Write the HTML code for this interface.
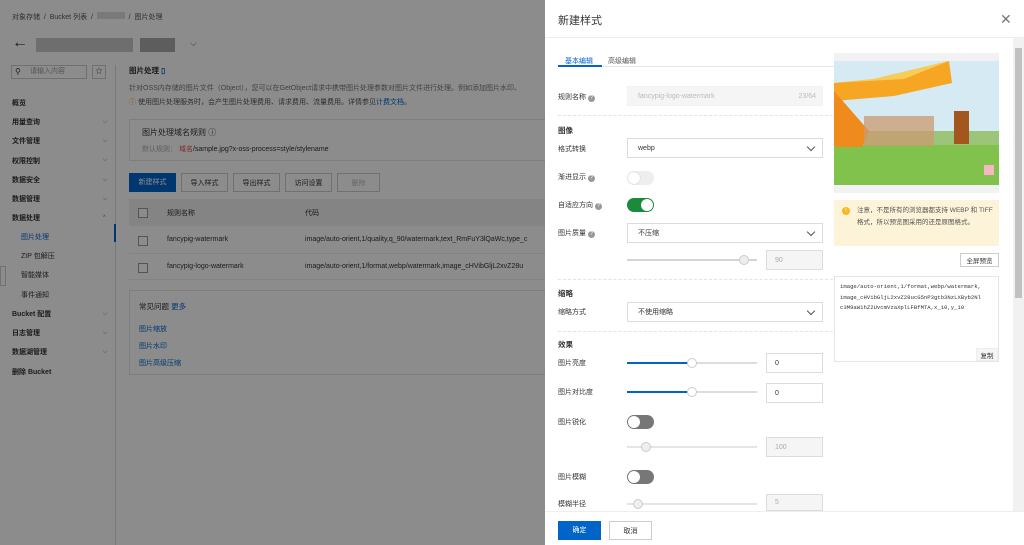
<!DOCTYPE html>
<html><head><meta charset="utf-8"><style>
*{box-sizing:border-box;margin:0;padding:0}
body{width:1024px;height:545px;overflow:hidden;position:relative;background:#fff;font-family:"Liberation Sans","Noto Sans CJK SC",sans-serif;font-size:7px;color:#333}
.a{position:absolute;white-space:nowrap}
.ov{position:absolute;left:0;top:0;width:1024px;height:545px;background:rgba(0,0,0,.45)}
.dr{position:absolute;left:545px;top:0;width:479px;height:545px;background:#fff}
.lb{position:absolute;left:13px;font-size:7px;color:#333}
.q{display:inline-block;width:7px;height:7px;border-radius:50%;background:#999;color:#fff;font-size:5px;text-align:center;line-height:7px;margin-left:2px;vertical-align:0}
.inp{position:absolute;left:82px;width:196px;height:20px;border:1px solid #dcdcdc;background:#fff;padding-left:10px;display:flex;align-items:center;font-size:7px;color:#333}
.sel:after{content:"";position:absolute;right:8px;top:5px;width:5px;height:5px;border-right:1px solid #555;border-bottom:1px solid #555;transform:rotate(45deg)}
.dash{position:absolute;left:13px;width:275px;border-top:1px dashed #e3e3e3}
.sec{position:absolute;left:13px;font-size:7.5px;font-weight:bold;color:#333}
.tg{position:absolute;left:82px;width:27px;height:14px;border-radius:7px}
.tg i{position:absolute;top:1px;width:12px;height:12px;border-radius:50%;background:#fff}
.trk{position:absolute;left:82px;width:130px;height:2px;background:#ddd}
.knob{position:absolute;width:10px;height:10px;border-radius:50%;background:#fff;border:1px solid #ccc;top:-4px}
.num{position:absolute;left:221px;width:57px;height:20px;border:1px solid #dcdcdc;padding-left:8px;display:flex;align-items:center;color:#333;font-size:7px}
.num.d{background:#f5f5f5;color:#aaa}
.btn{position:absolute;height:20px;border:1px solid #ccc;background:#fff;display:flex;align-items:center;justify-content:center;font-size:7px}
</style></head><body>
<div class="a" style="left:12px;top:12px;color:#555">对象存储 &nbsp;/&nbsp; Bucket 列表 &nbsp;/&nbsp; <span style="display:inline-block;width:28px;height:7px;background:#ddd"></span> &nbsp;/&nbsp; 图片处理</div>
<div class="a" style="left:12px;top:34px;font-size:16px;color:#333">←</div>
<div class="a" style="left:36px;top:38px;width:97px;height:14px;background:#c8c8c8"></div>
<div class="a" style="left:140px;top:38px;width:35px;height:14px;background:#aaa"></div>
<div class="a" style="left:190px;top:38px;font-size:9px;color:#666">⌵</div>
<div class="a" style="left:11px;top:65px;width:76px;height:14px;border:1px solid #ccc;padding-left:18px;line-height:12px;color:#999">请输入内容</div>
<div class="a" style="left:15px;top:67px;font-size:8px;color:#333">⚲</div>
<div class="a" style="left:92px;top:65px;width:14px;height:14px;border:1px solid #ccc;text-align:center;line-height:12px;font-size:7px">☆</div>
<div class="a" style="left:12px;top:94px;font-weight:bold;line-height:19.2px">概览<br>用量查询<br>文件管理<br>权限控制<br>数据安全<br>数据管理<br>数据处理</div>
<div class="a" style="left:21px;top:228px;line-height:19.2px;color:#333"><span style="color:#0064c8">图片处理</span><br>ZIP 包解压<br>智能媒体<br>事件通知</div>
<div class="a" style="left:12px;top:305px;font-weight:bold;line-height:19.2px">Bucket 配置<br>日志管理<br>数据湖管理<br>删除 Bucket</div>
<div class="a" style="left:103px;top:113px;line-height:19.2px;color:#777;font-size:6px">⌵<br>⌵<br>⌵<br>⌵<br>⌵<br>^<br></div>
<div class="a" style="left:103px;top:305px;line-height:19.2px;color:#777;font-size:6px">⌵<br>⌵<br>⌵</div>
<div class="a" style="left:115px;top:65px;width:1px;height:480px;background:#ddd"></div>
<div class="a" style="left:114px;top:224px;width:2px;height:18px;background:#0064c8"></div>
<div class="a" style="left:129px;top:65px;font-weight:bold;font-size:7.5px">图片处理 <span style="color:#0064c8">▯</span></div>
<div class="a" style="left:129px;top:83px;color:#777">针对OSS内存储的图片文件（Object），您可以在GetObject请求中携带图片处理参数对图片文件进行处理。例如添加图片水印、</div>
<div class="a" style="left:129px;top:97px;color:#555"><span style="color:#f90">ⓘ</span> 使用图片处理服务时，会产生图片处理费用、请求费用、流量费用。详情参见<span style="color:#0064c8">计费文档</span>。</div>
<div class="a" style="left:129px;top:119px;width:420px;height:42px;border:1px solid #e5e5e5"></div>
<div class="a" style="left:142px;top:127px;font-size:8px;color:#333">图片处理域名规则 ⓘ</div>
<div class="a" style="left:142px;top:144px;color:#aaa">默认规则： <span style="color:#e44">域名</span><span style="color:#333">/sample.jpg?x-oss-process=style/stylename</span></div>
<div class="a" style="left:129px;top:173px;width:47px;height:19px;background:#0064c8;color:#fff;text-align:center;line-height:19px">新建样式</div>
<div class="btn" style="left:181px;top:173px;width:47px;height:19px">导入样式</div>
<div class="btn" style="left:233px;top:173px;width:47px;height:19px">导出样式</div>
<div class="btn" style="left:285px;top:173px;width:47px;height:19px">访问设置</div>
<div class="btn" style="left:337px;top:173px;width:43px;height:19px;color:#bbb">删除</div>
<div class="a" style="left:129px;top:199px;width:420px;height:27px;background:#f0f0f0"></div>
<div class="a" style="left:138px;top:208px;width:10px;height:10px;border:1px solid #999;background:#fff"></div>
<div class="a" style="left:167px;top:208px">规则名称</div><div class="a" style="left:305px;top:208px">代码</div>
<div class="a" style="left:138px;top:236px;width:10px;height:10px;border:1px solid #999;background:#fff"></div>
<div class="a" style="left:167px;top:236px">fancypig-watermark</div><div class="a" style="left:305px;top:236px">image/auto-orient,1/quality,q_90/watermark,text_RmFuY3lQaWc,type_c</div>
<div class="a" style="left:129px;top:253px;width:420px;height:1px;background:#eee"></div>
<div class="a" style="left:138px;top:263px;width:10px;height:10px;border:1px solid #999;background:#fff"></div>
<div class="a" style="left:167px;top:263px">fancypig-logo-watermark</div><div class="a" style="left:305px;top:263px">image/auto-orient,1/format,webp/watermark,image_cHVibGljL2xvZ28u</div>
<div class="a" style="left:129px;top:279px;width:420px;height:1px;background:#eee"></div>
<div class="a" style="left:129px;top:290px;width:420px;height:85px;border:1px solid #e5e5e5"></div>
<div class="a" style="left:139px;top:301px;font-size:7.5px">常见问题 <span style="color:#0064c8">更多</span></div>
<div class="a" style="left:139px;top:321px;color:#0064c8;line-height:17px">图片缩放<br>图片水印<br>图片高级压缩</div>
<div class="a" style="left:0;top:266px;width:6px;height:20px;border:1px solid #ccc;background:#fff"></div>
<div class="ov"></div>
<div class="dr">
<div class="a" style="left:13px;top:12px;font-size:11px;color:#333">新建样式</div>
<div class="a" style="left:455px;top:11px;font-size:14px;color:#777;font-weight:300">✕</div>
<div class="a" style="left:0;top:37px;width:479px;height:1px;background:#eee"></div>
<div class="a" style="left:20px;top:56px;color:#0064c8;font-size:7px">基本编辑</div>
<div class="a" style="left:63px;top:56px;color:#555;font-size:7px">高级编辑</div>
<div class="a" style="left:13px;top:66px;width:276px;height:1px;background:#e5e5e5"></div>
<div class="a" style="left:13px;top:65px;width:44px;height:2px;background:#0064c8"></div>
<div class="lb" style="top:92px">规则名称<span class="q">?</span></div>
<div class="inp" style="top:86px;background:#f5f5f5;border-color:#f2f2f2;color:#bbb">fancypig-logo-watermark<span style="position:absolute;right:6px">23/64</span></div>
<div class="dash" style="top:115px"></div>
<div class="sec" style="top:125px">图像</div>
<div class="lb" style="top:144px">格式转换</div>
<div class="inp sel" style="top:138px">webp</div>
<div class="lb" style="top:172px">渐进显示<span class="q">?</span></div>
<div class="tg" style="top:171px;background:#eee"><i style="left:1px;box-shadow:0 0 1px #aaa"></i></div>
<div class="lb" style="top:200px">自适应方向<span class="q">?</span></div>
<div class="tg" style="top:198px;background:#1b8a3a"><i style="right:1px"></i></div>
<div class="lb" style="top:228px">图片质量<span class="q">?</span></div>
<div class="inp sel" style="top:223px">不压缩</div>
<div class="trk" style="top:259px;background:#d5d5d5"><div class="knob" style="left:112px;background:#eee"></div></div>
<div class="num d" style="top:250px">90</div>
<div class="dash" style="top:279px"></div>
<div class="sec" style="top:288px">缩略</div>
<div class="lb" style="top:307px">缩略方式</div>
<div class="inp sel" style="top:302px">不使用缩略</div>
<div class="dash" style="top:331px"></div>
<div class="sec" style="top:339px">效果</div>
<div class="lb" style="top:358px">图片亮度</div>
<div class="trk" style="top:362px"><div style="position:absolute;left:0;top:0;width:65px;height:2px;background:#0064c8"></div><div class="knob" style="left:60px"></div></div>
<div class="num" style="top:353px">0</div>
<div class="lb" style="top:387px">图片对比度</div>
<div class="trk" style="top:391px"><div style="position:absolute;left:0;top:0;width:65px;height:2px;background:#0064c8"></div><div class="knob" style="left:60px"></div></div>
<div class="num" style="top:383px">0</div>
<div class="lb" style="top:417px">图片锐化</div>
<div class="tg" style="top:415px;background:#777"><i style="left:1px"></i></div>
<div class="trk" style="top:446px;background:#e5e5e5"><div class="knob" style="left:14px;background:#eee"></div></div>
<div class="num d" style="top:437px">100</div>
<div class="lb" style="top:472px">图片模糊</div>
<div class="tg" style="top:470px;background:#777"><i style="left:1px"></i></div>
<div class="lb" style="top:499px">模糊半径</div>
<div class="trk" style="top:503px;background:#e5e5e5"><div class="knob" style="left:6px;background:#eee"></div></div>
<div class="num d" style="top:494px;height:17px">5</div>
<div class="a" style="left:289px;top:53px;width:165px;height:140px;background:#f2f2f2"></div>
<svg class="a" style="left:289px;top:61px" width="165" height="124" viewBox="0 0 165 124">
<rect width="165" height="124" fill="#d6eaf3"/>
<rect y="70" width="165" height="20" fill="#9cc57a"/>
<rect y="84" width="165" height="40" fill="#80c24c"/>
<polygon points="0,22 40,18 115,0 118,22 60,35 0,40" fill="#f6a623"/>
<polygon points="0,22 40,18 115,0 70,18" fill="#f9cc55"/>
<polygon points="0,30 35,70 28,86 0,86" fill="#ef8a1c"/>
<rect x="30" y="55" width="70" height="30" fill="#c99a70" opacity=".75"/>
<rect x="120" y="50" width="15" height="33" fill="#a3561e"/>
<rect x="150" y="104" width="10" height="10" fill="#f6b6c4"/>
</svg>
<div class="a" style="left:289px;top:200px;width:165px;height:46px;background:#fdf3d8"></div>
<div class="a" style="left:297px;top:207px;width:8px;height:8px;border-radius:50%;background:#f8b81b;color:#fff;font-size:6px;text-align:center;line-height:8px">!</div>
<div class="a" style="left:312px;top:205px;color:#555;font-size:6.5px;line-height:12px;white-space:normal;width:140px">注意，不是所有的浏览器都支持 WEBP 和 TIFF 格式，所以预览图采用的还是原图格式。</div>
<div class="btn" style="left:415px;top:253px;width:39px;height:14px;font-size:6.5px">全屏预览</div>
<div class="a" style="left:289px;top:276px;width:165px;height:86px;border:1px solid #e5e5e5"></div>
<div class="a" style="left:295px;top:282px;font-family:'Liberation Mono',monospace;font-size:5.6px;line-height:10.5px;color:#333">image/auto-orient,1/format,webp/watermark,<br>image_cHVibGljL2xvZ28ucG5nP3gtb3NzLXByb2Nl<br>c3M9aW1hZ2UvcmVzaXplLFBfMTA,x_10,y_10</div>
<div class="btn" style="left:431px;top:348px;width:22px;height:13px;font-size:6.5px;border-color:#eee;background:#f5f5f5">复制</div>
<div class="a" style="left:468px;top:38px;width:11px;height:473px;background:#f1f1f1"></div>
<div class="a" style="left:470px;top:48px;width:7px;height:250px;background:#c1c1c1"></div>
<div class="a" style="left:0;top:511px;width:479px;height:1px;background:#eee"></div>
<div class="a" style="left:13px;top:521px;width:43px;height:19px;background:#0064c8;color:#fff;text-align:center;line-height:19px">确定</div>
<div class="btn" style="left:64px;top:521px;width:43px;height:19px">取消</div>
</div>
</body></html>
